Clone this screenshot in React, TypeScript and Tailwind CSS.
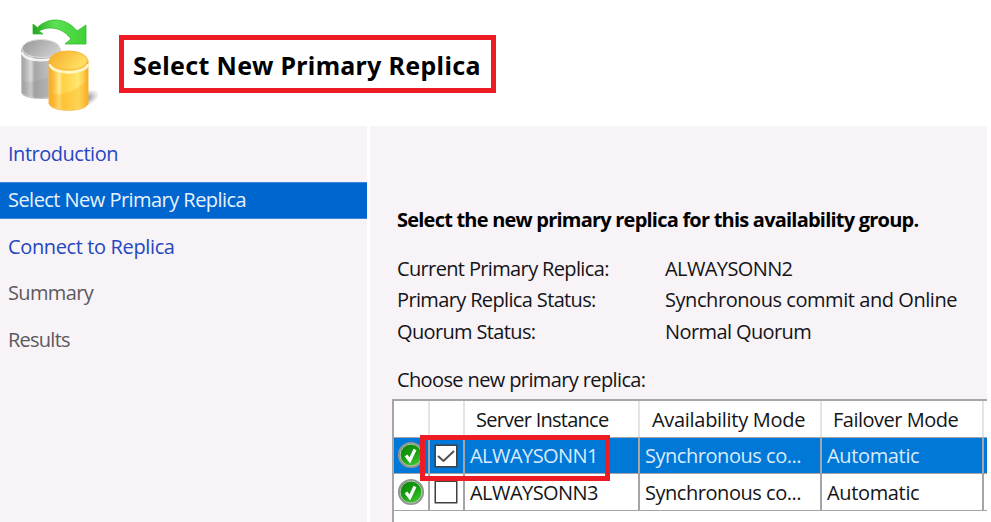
import type { ReactNode } from "react";

const steps = [
  { label: "Introduction", tone: "text-[#2447c0]", track: "tracking-[-0.48px]" },
  { label: "Select New Primary Replica", tone: "text-[#e8f2fc] bg-[#0066cf] border-y border-[#3b86d8]", track: "tracking-[-0.54px]" },
  { label: "Connect to Replica", tone: "text-[#2447c0]", track: "tracking-[-0.37px]" },
  { label: "Summary", tone: "text-[#5c5a60]", track: "tracking-[-0.65px]" },
  { label: "Results", tone: "text-[#5c5a60]", track: "tracking-[-0.75px]" },
];

const facts = [
  { label: "Current Primary Replica:", value: "ALWAYSONN2", track: "tracking-[-0.6px]" },
  { label: "Primary Replica Status:", value: "Synchronous commit and Online", track: "tracking-[-0.44px]" },
  { label: "Quorum Status:", value: "Normal Quorum", track: "tracking-[-0.6px]" },
];

function DatabaseSwapIcon() {
  return (
    <svg width="90" height="104" viewBox="15 12 90 104" className="shrink-0">
      <defs>
        <linearGradient id="silver" x1="0" x2="1">
          <stop offset="0" stopColor="#a2a2a2" />
          <stop offset="0.1" stopColor="#b4b4b4" />
          <stop offset="0.24" stopColor="#dadada" />
          <stop offset="0.34" stopColor="#a6a6a6" />
          <stop offset="0.65" stopColor="#bcbcbc" />
          <stop offset="1" stopColor="#b8b8b8" />
        </linearGradient>
        <linearGradient id="gold" x1="0" x2="1">
          <stop offset="0" stopColor="#f5a823" />
          <stop offset="0.12" stopColor="#fbbd3c" />
          <stop offset="0.26" stopColor="#ffe88f" />
          <stop offset="0.36" stopColor="#fdcf44" />
          <stop offset="0.75" stopColor="#ffe770" />
          <stop offset="0.9" stopColor="#fdc845" />
          <stop offset="1" stopColor="#f3a423" />
        </linearGradient>
        <linearGradient id="goldTop" x1="0" x2="1" y2="0.5">
          <stop offset="0" stopColor="#f5aa24" />
          <stop offset="1" stopColor="#ffe065" />
        </linearGradient>
        <linearGradient id="silverTop" x1="0" x2="1" y2="0.5">
          <stop offset="0" stopColor="#969696" />
          <stop offset="1" stopColor="#cccccc" />
        </linearGradient>
        <linearGradient id="leaf" x1="0" x2="1">
          <stop offset="0" stopColor="#23a323" />
          <stop offset="0.4" stopColor="#5ce052" />
          <stop offset="1" stopColor="#3fd136" />
        </linearGradient>
        <radialGradient id="shade">
          <stop offset="0" stopColor="#5f5f5f" stopOpacity="0.85" />
          <stop offset="1" stopColor="#6f6f6f" stopOpacity="0" />
        </radialGradient>
      </defs>
      <ellipse cx="84" cy="99" rx="16" ry="8" fill="url(#shade)" transform="rotate(-22 84 99)" />
      <path d="M21.500 49v43.500c2 8 37 8 39 0V49z" fill="url(#silver)" stroke="#c4c4c4" />
      <path d="M23 82q20 1 37-13v23c-2 7-35 7-37 0z" fill="#8f8f8f" opacity="0.22" />
      <path d="M22 52c1 11 37 11 38 0" fill="none" stroke="#f4f4f4" strokeWidth="2.600" />
      <ellipse cx="41" cy="48.500" rx="19" ry="9" fill="url(#silverTop)" stroke="#dedede" />
      <path d="M49 60v43.500c2 9 37 9 39 0V60z" fill="url(#gold)" stroke="#f6b640" />
      <path d="M50 95q20 1 37-14v22c-2 8-35 8-37 0z" fill="#f9b01c" opacity="0.35" />
      <path d="M50 64c1 11 36 11 38 0" fill="none" stroke="#fff6c5" strokeWidth="2.800" />
      <ellipse cx="68.500" cy="60.500" rx="19" ry="9.500" fill="url(#goldTop)" stroke="#f9b53b" />
      <path d="M33 24l4.500 3.500C48 17 66 17 77 31l9-6v19H65l6-5C63 28 50 25 39 31l4 3H33z" fill="url(#leaf)" stroke="#36b931" strokeWidth="0.8" />
    </svg>
  );
}

function StatusIcon() {
  return (
    <svg width="28" height="28" viewBox="0 0 28 28" className="block">
      <defs>
        <linearGradient id="ok" x1="0" y1="0" x2="0.600" y2="1">
          <stop offset="0" stopColor="#0e7d0c" />
          <stop offset="0.6" stopColor="#17a010" />
          <stop offset="1" stopColor="#3dc72f" />
        </linearGradient>
      </defs>
      <circle cx="14" cy="14" r="12.200" fill="url(#ok)" stroke="#959595" strokeWidth="1.800" />
      <circle cx="14" cy="14" r="10.900" fill="none" stroke="#bcc4bb" strokeWidth="1" />
      <path d="M9 14.500l3.800 5L18 8.500" fill="none" stroke="#fff" strokeWidth="3.200" />
    </svg>
  );
}

function CheckBox({ checked }: { checked: boolean }) {
  return (
    <span className="block size-[22px] border-[1.500px] border-[#404040] bg-white shadow-[0_0_0_0.500px_#404040]">
      {checked && (
        <svg viewBox="0 0 20 20" className="size-full">
          <path d="M2 10l5.500 5L18 5" fill="none" stroke="#505050" strokeWidth="2" />
        </svg>
      )}
    </span>
  );
}

function Cell({ children, className }: { children?: ReactNode; className: string }) {
  return <div className={`flex h-full shrink-0 items-center border-r-2 whitespace-nowrap ${className}`}>{children}</div>;
}

function Row({ name, checked }: { name: string; checked: boolean }) {
  return (
    <div className={`flex h-[36.500px] border-b-[1.500px] border-[#a5a5a9] ${checked ? "bg-[#0078d7] text-[#d9ebfb]" : "bg-white text-[#141418]"}`}>
      <Cell className="w-[36px] border-[#a5a5a9] pl-[3px]"><StatusIcon /></Cell>
      <Cell className="w-[35px] border-[#a5a5a9] pt-px pl-[5px]"><CheckBox checked={checked} /></Cell>
      <Cell className="w-[175px] border-[#a5a5a9] pt-[2px] pl-[5px] tracking-[-0.55px]">{name}</Cell>
      <Cell className="w-[182px] border-[#a5a5a9] pt-[2px] pl-[5px] tracking-[-0.46px]">Synchronous co...</Cell>
      <Cell className="w-[162px] border-[#a5a5a9] pt-[2px] pl-[5px] tracking-[-0.35px]">Automatic</Cell>
    </div>
  );
}

export default function App() {
  return (
    <div className="relative flex h-[522px] w-[987px] flex-col overflow-hidden bg-white font-['Open_Sans','Noto_Sans',sans-serif] text-[20px] leading-[24px] text-[#141418]">
      <header className="flex h-[126px] shrink-0 items-start pt-3 pl-[15px]">
        <DatabaseSwapIcon />
        <h1 className="mt-[23px] ml-[14px] flex h-[58px] w-[377px] items-center border-[5px] border-[#ed1c24] pt-px pl-[9px] font-['Noto_Sans',sans-serif] text-[25px] font-bold tracking-[0.32px] whitespace-nowrap text-black">Select New Primary Replica</h1>
      </header>
      <div className="flex min-h-0 flex-1 gap-[3px]">
        <nav className="flex w-[367px] shrink-0 flex-col gap-[9px] bg-[#f7f3f7] pt-[9px]">
          {steps.map((s) => (
            <a key={s.label} className={`flex h-[37.500px] items-center pl-2 ${s.tone}`}><span className={s.track}>{s.label}</span></a>
          ))}
        </nav>
        <main className="flex min-w-0 flex-1 flex-col bg-[#f7f3f7] pt-[82px] pl-[22px]">
          <h2 className="pl-[5px] font-bold tracking-[-0.78px] whitespace-nowrap text-black">Select the new primary replica for this availability group.</h2>
          <dl className="mt-[21px] flex flex-col pl-[5px]">
            {facts.map((f) => (
              <div key={f.label} className="flex h-[31.500px] items-center">
                <dt className="w-[268px] tracking-[-0.64px]">{f.label}</dt>
                <dd className={`whitespace-nowrap ${f.track}`}>{f.value}</dd>
              </div>
            ))}
          </dl>
          <p className="mt-5 pl-[5px] tracking-[-0.62px]">Choose new primary replica:</p>
          <div className="mt-[7px] flex-1 overflow-hidden border-t-2 border-l-2 border-[#a5a5ab] bg-white">
            <div className="flex h-[37px] border-b border-[#a5a5a9]">
              <Cell className="w-[36px] border-[#e5e5e5]" />
              <Cell className="w-[35px] border-[#e5e5e5]" />
              <Cell className="w-[175px] border-[#e5e5e5] pt-[2px] pl-[11px] tracking-[-0.75px]">Server Instance</Cell>
              <Cell className="w-[182px] border-[#e5e5e5] pt-[2px] pl-3 tracking-[-0.3px]">Availability Mode</Cell>
              <Cell className="w-[162px] border-[#e5e5e5] pt-[2px] pl-[11px] tracking-[-0.5px]">Failover Mode</Cell>
            </div>
            <Row name="ALWAYSONN1" checked />
            <Row name="ALWAYSONN3" checked={false} />
          </div>
        </main>
      </div>
      <div className="absolute top-[435px] left-[420px] h-[46px] w-[190px] border-[5px] border-[#ed1c24]" />
    </div>
  );
}
